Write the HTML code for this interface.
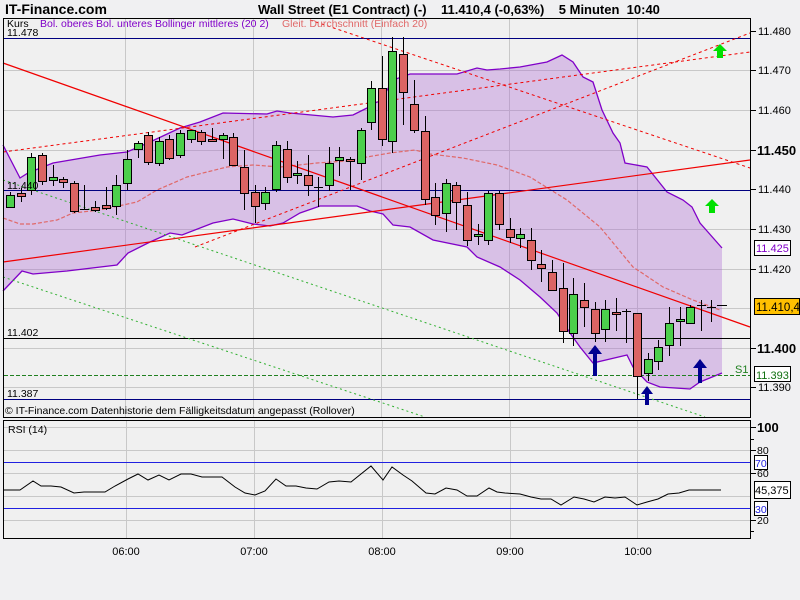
<!DOCTYPE html>
<html><head><meta charset="utf-8"><style>
html,body{margin:0;padding:0;background:#f0f0f2;width:800px;height:600px;overflow:hidden}
svg{display:block;font-family:"Liberation Sans",sans-serif}
</style></head><body>
<svg width="800" height="600" viewBox="0 0 800 600" xmlns="http://www.w3.org/2000/svg">
<rect x="0" y="0" width="800" height="600" fill="#f0f0f2"/>
<text x="5" y="14" font-size="14" font-weight="bold" fill="#000">IT-Finance.com</text>
<text x="258" y="14" font-size="13" font-weight="bold" fill="#000" xml:space="preserve">Wall Street (E1 Contract) (-)    11.410,4 (-0,63%)    5 Minuten  10:40</text>

<!-- main chart -->
<rect x="3.5" y="18.5" width="747" height="399" fill="#f0f0f0" stroke="none"/>
<g stroke="#c8c8c8" stroke-width="1">
<line x1="4" y1="70.5" x2="750" y2="70.5"/><line x1="4" y1="110.5" x2="750" y2="110.5"/><line x1="4" y1="150.5" x2="750" y2="150.5"/><line x1="4" y1="229.5" x2="750" y2="229.5"/><line x1="4" y1="269.5" x2="750" y2="269.5"/><line x1="4" y1="308.5" x2="750" y2="308.5"/><line x1="4" y1="348.5" x2="750" y2="348.5"/><line x1="4" y1="387.5" x2="750" y2="387.5"/>
<line x1="125.5" y1="19" x2="125.5" y2="417"/><line x1="253.5" y1="19" x2="253.5" y2="417"/><line x1="381.5" y1="19" x2="381.5" y2="417"/><line x1="509.5" y1="19" x2="509.5" y2="417"/><line x1="637.5" y1="19" x2="637.5" y2="417"/>
</g>
<polygon fill="rgba(171,103,211,0.35)" points="3,145 20,178 28,173 53,163 100,155 127,152 150,142 180,128 200,122 223,113 267,114 277,111 290,113 333,117 353,115 367,108 377,102 380,102 393,80 410,74 457,74 477,68 487,70 500,69 520,67 547,62 562,55 573,62 583,77 593,82 602,110 613,133 620,143 625,163 647,167 667,192 683,200 692,207 700,223 722,248 722,373 700,382 690,389 660,387 647,382 633,367 627,355 593,363 580,347 570,333 557,313 540,297 520,280 500,267 477,257 467,247 433,240 410,227 393,225 383,214 370,211 357,206 320,206 300,213 283,223 270,226 253,224 233,219 213,223 182,235 170,233 150,242 128,253 117,265 67,271 33,274 22,271 3,291"/>
<polyline fill="none" stroke="#8000c8" stroke-width="1.3" points="3,145 20,178 28,173 53,163 100,155 127,152 150,142 180,128 200,122 223,113 267,114 277,111 290,113 333,117 353,115 367,108 377,102 380,102 393,80 410,74 457,74 477,68 487,70 500,69 520,67 547,62 562,55 573,62 583,77 593,82 602,110 613,133 620,143 625,163 647,167 667,192 683,200 692,207 700,223 722,248"/>
<polyline fill="none" stroke="#8000c8" stroke-width="1.3" points="722,373 700,382 690,389 660,387 647,382 633,367 627,355 593,363 580,347 570,333 557,313 540,297 520,280 500,267 477,257 467,247 433,240 410,227 393,225 383,214 370,211 357,206 320,206 300,213 283,223 270,226 253,224 233,219 213,223 182,235 170,233 150,242 128,253 117,265 67,271 33,274 22,271 3,291"/>
<polyline fill="none" stroke="#e06868" stroke-width="1.2" stroke-dasharray="4,2" points="3,218 20,224 33,224 57,220 73,213 100,210 123,205 137,202 157,190 187,177 207,172 227,167 253,165 280,167 317,163 347,161 367,157 390,153 415,150 430,154 463,158 497,165 530,177 567,200 600,227 633,267 663,287 693,300 720,310"/>

<!-- horizontal levels -->
<line x1="4" y1="38.5" x2="750" y2="38.5" stroke="#000080"/>
<line x1="4" y1="190.5" x2="750" y2="190.5" stroke="#000080"/>
<line x1="4" y1="338.5" x2="750" y2="338.5" stroke="#000"/>
<line x1="4" y1="399.5" x2="750" y2="399.5" stroke="#000080"/>
<line x1="4" y1="375.5" x2="750" y2="375.5" stroke="#208020" stroke-dasharray="4,2"/>

<!-- trend lines -->
<line x1="3" y1="63" x2="750" y2="327" stroke="#f00000" stroke-width="1.2"/>
<line x1="3" y1="262" x2="750" y2="160" stroke="#f00000" stroke-width="1.2"/>
<line x1="3" y1="152" x2="750" y2="52" stroke="#f00000" stroke-dasharray="3,3"/>
<line x1="195" y1="247" x2="750" y2="33" stroke="#f00000" stroke-dasharray="3,3"/>
<line x1="310" y1="20" x2="750" y2="168" stroke="#f00000" stroke-dasharray="3,3"/>
<line x1="3" y1="180" x2="705" y2="417" stroke="#30b030" stroke-dasharray="2,3"/>
<line x1="3" y1="277" x2="425" y2="417" stroke="#30b030" stroke-dasharray="2,3"/>

<!-- candles -->
<g stroke="#000" stroke-width="1">
<line x1="10.5" y1="192" x2="10.5" y2="207"/><rect x="6.5" y="195.5" width="8" height="12" fill="#4ccf4c"/>
<line x1="21.5" y1="188" x2="21.5" y2="202"/><rect x="17.5" y="193.5" width="8" height="3" fill="#dc6464"/>
<line x1="31.5" y1="153" x2="31.5" y2="195"/><rect x="27.5" y="157.5" width="8" height="33" fill="#4ccf4c"/>
<line x1="42.5" y1="153" x2="42.5" y2="185"/><rect x="38.5" y="155.5" width="8" height="26" fill="#dc6464"/>
<line x1="53.5" y1="165" x2="53.5" y2="186"/><rect x="49.5" y="177.5" width="8" height="3" fill="#4ccf4c"/>
<line x1="63.5" y1="177" x2="63.5" y2="188"/><rect x="59.5" y="179.5" width="8" height="3" fill="#dc6464"/>
<line x1="74.5" y1="181" x2="74.5" y2="213"/><rect x="70.5" y="183.5" width="8" height="28" fill="#dc6464"/>
<line x1="84.5" y1="185" x2="84.5" y2="210"/><line x1="80" y1="209.5" x2="89" y2="209.5"/>
<line x1="95.5" y1="201" x2="95.5" y2="212"/><rect x="91.5" y="207.5" width="8" height="3" fill="#dc6464"/>
<line x1="106.5" y1="187" x2="106.5" y2="210"/><rect x="102.5" y="205.5" width="8" height="3" fill="#dc6464"/>
<line x1="116.5" y1="175" x2="116.5" y2="215"/><rect x="112.5" y="185.5" width="8" height="21" fill="#4ccf4c"/>
<line x1="127.5" y1="150" x2="127.5" y2="190"/><rect x="123.5" y="159.5" width="8" height="24" fill="#4ccf4c"/>
<line x1="138.5" y1="141" x2="138.5" y2="158"/><rect x="134.5" y="143.5" width="8" height="6" fill="#4ccf4c"/>
<line x1="148.5" y1="132" x2="148.5" y2="165"/><rect x="144.5" y="135.5" width="8" height="27" fill="#dc6464"/>
<line x1="159.5" y1="137" x2="159.5" y2="166"/><rect x="155.5" y="141.5" width="8" height="22" fill="#4ccf4c"/>
<line x1="169.5" y1="135" x2="169.5" y2="160"/><rect x="165.5" y="139.5" width="8" height="19" fill="#dc6464"/>
<line x1="180.5" y1="130" x2="180.5" y2="158"/><rect x="176.5" y="133.5" width="8" height="22" fill="#4ccf4c"/>
<line x1="191.5" y1="130" x2="191.5" y2="143"/><rect x="187.5" y="130.5" width="8" height="9" fill="#4ccf4c"/>
<line x1="201.5" y1="130" x2="201.5" y2="145"/><rect x="197.5" y="132.5" width="8" height="9" fill="#dc6464"/>
<line x1="212.5" y1="128" x2="212.5" y2="141"/><rect x="208.5" y="139.5" width="8" height="2" fill="#dc6464"/>
<line x1="223.5" y1="133" x2="223.5" y2="159"/><rect x="219.5" y="135.5" width="8" height="4" fill="#4ccf4c"/>
<line x1="233.5" y1="133" x2="233.5" y2="166"/><rect x="229.5" y="137.5" width="8" height="28" fill="#dc6464"/>
<line x1="244.5" y1="150" x2="244.5" y2="210"/><rect x="240.5" y="167.5" width="8" height="26" fill="#dc6464"/>
<line x1="255.5" y1="185" x2="255.5" y2="223"/><rect x="251.5" y="192.5" width="8" height="14" fill="#dc6464"/>
<line x1="265.5" y1="187" x2="265.5" y2="210"/><rect x="261.5" y="192.5" width="8" height="11" fill="#4ccf4c"/>
<line x1="276.5" y1="141" x2="276.5" y2="192"/><rect x="272.5" y="145.5" width="8" height="44" fill="#4ccf4c"/>
<line x1="287.5" y1="141" x2="287.5" y2="183"/><rect x="283.5" y="149.5" width="8" height="28" fill="#dc6464"/>
<line x1="297.5" y1="161" x2="297.5" y2="184"/><rect x="293.5" y="173.5" width="8" height="2" fill="#4ccf4c"/>
<line x1="308.5" y1="155" x2="308.5" y2="196"/><rect x="304.5" y="175.5" width="8" height="10" fill="#dc6464"/>
<line x1="318.5" y1="177" x2="318.5" y2="207"/><line x1="314" y1="187.5" x2="323" y2="187.5"/>
<line x1="329.5" y1="147" x2="329.5" y2="191"/><rect x="325.5" y="163.5" width="8" height="22" fill="#4ccf4c"/>
<line x1="339.5" y1="147" x2="339.5" y2="176"/><rect x="335.5" y="157.5" width="8" height="3" fill="#4ccf4c"/>
<line x1="350.5" y1="157" x2="350.5" y2="190"/><rect x="346.5" y="159.5" width="8" height="2" fill="#dc6464"/>
<line x1="361.5" y1="128" x2="361.5" y2="180"/><rect x="357.5" y="130.5" width="8" height="33" fill="#4ccf4c"/>
<line x1="371.5" y1="81" x2="371.5" y2="130"/><rect x="367.5" y="88.5" width="8" height="34" fill="#4ccf4c"/>
<line x1="382.5" y1="56" x2="382.5" y2="146"/><rect x="378.5" y="88.5" width="8" height="51" fill="#dc6464"/>
<line x1="392.5" y1="37" x2="392.5" y2="153"/><rect x="388.5" y="51.5" width="8" height="90" fill="#4ccf4c"/>
<line x1="403.5" y1="37" x2="403.5" y2="125"/><rect x="399.5" y="54.5" width="8" height="38" fill="#dc6464"/>
<line x1="414.5" y1="80" x2="414.5" y2="133"/><rect x="410.5" y="104.5" width="8" height="26" fill="#dc6464"/>
<line x1="425.5" y1="116" x2="425.5" y2="205"/><rect x="421.5" y="131.5" width="8" height="68" fill="#dc6464"/>
<line x1="435.5" y1="183" x2="435.5" y2="225"/><rect x="431.5" y="197.5" width="8" height="18" fill="#dc6464"/>
<line x1="446.5" y1="179" x2="446.5" y2="232"/><rect x="442.5" y="183.5" width="8" height="30" fill="#4ccf4c"/>
<line x1="456.5" y1="182" x2="456.5" y2="230"/><rect x="452.5" y="185.5" width="8" height="17" fill="#dc6464"/>
<line x1="467.5" y1="192" x2="467.5" y2="246"/><rect x="463.5" y="205.5" width="8" height="35" fill="#dc6464"/>
<line x1="478.5" y1="224" x2="478.5" y2="245"/><rect x="474.5" y="234.5" width="8" height="2" fill="#4ccf4c"/>
<line x1="488.5" y1="191" x2="488.5" y2="245"/><rect x="484.5" y="193.5" width="8" height="47" fill="#4ccf4c"/>
<line x1="499.5" y1="191" x2="499.5" y2="230"/><rect x="495.5" y="193.5" width="8" height="31" fill="#dc6464"/>
<line x1="510.5" y1="218" x2="510.5" y2="243"/><rect x="506.5" y="229.5" width="8" height="8" fill="#dc6464"/>
<line x1="520.5" y1="228" x2="520.5" y2="248"/><rect x="516.5" y="234.5" width="8" height="4" fill="#4ccf4c"/>
<line x1="531.5" y1="228" x2="531.5" y2="270"/><rect x="527.5" y="240.5" width="8" height="20" fill="#dc6464"/>
<line x1="541.5" y1="250" x2="541.5" y2="282"/><rect x="537.5" y="264.5" width="8" height="4" fill="#dc6464"/>
<line x1="552.5" y1="260" x2="552.5" y2="290"/><rect x="548.5" y="272.5" width="8" height="18" fill="#dc6464"/>
<line x1="563.5" y1="263" x2="563.5" y2="343"/><rect x="559.5" y="288.5" width="8" height="43" fill="#dc6464"/>
<line x1="573.5" y1="278" x2="573.5" y2="346"/><rect x="569.5" y="294.5" width="8" height="39" fill="#4ccf4c"/>
<line x1="584.5" y1="283" x2="584.5" y2="327"/><rect x="580.5" y="300.5" width="8" height="7" fill="#dc6464"/>
<line x1="595.5" y1="302" x2="595.5" y2="342"/><rect x="591.5" y="309.5" width="8" height="24" fill="#dc6464"/>
<line x1="605.5" y1="300" x2="605.5" y2="342"/><rect x="601.5" y="309.5" width="8" height="20" fill="#4ccf4c"/>
<line x1="616.5" y1="298" x2="616.5" y2="331"/><rect x="612.5" y="312.5" width="8" height="2" fill="#dc6464"/>
<line x1="626.5" y1="309" x2="626.5" y2="343"/><line x1="622" y1="311.5" x2="631" y2="311.5"/>
<line x1="637.5" y1="313" x2="637.5" y2="399"/><rect x="633.5" y="313.5" width="8" height="63" fill="#dc6464"/>
<line x1="648.5" y1="353" x2="648.5" y2="381"/><rect x="644.5" y="359.5" width="8" height="14" fill="#4ccf4c"/>
<line x1="658.5" y1="340" x2="658.5" y2="370"/><rect x="654.5" y="347.5" width="8" height="14" fill="#4ccf4c"/>
<line x1="669.5" y1="307" x2="669.5" y2="356"/><rect x="665.5" y="323.5" width="8" height="22" fill="#4ccf4c"/>
<line x1="680.5" y1="307" x2="680.5" y2="346"/><rect x="676.5" y="319.5" width="8" height="2" fill="#4ccf4c"/>
<line x1="690.5" y1="305" x2="690.5" y2="324"/><rect x="686.5" y="307.5" width="8" height="16" fill="#4ccf4c"/>
<line x1="701.5" y1="300" x2="701.5" y2="331"/><line x1="697" y1="305.5" x2="706" y2="305.5"/>
<line x1="711.5" y1="300" x2="711.5" y2="322"/><line x1="707" y1="307.5" x2="716" y2="307.5"/>
<line x1="717" y1="305.5" x2="727" y2="305.5"/>
</g>

<!-- arrows -->
<g fill="#00e000"><polygon points="720,44 727,51 723,51 723,58 717,58 717,51 713,51"/><polygon points="712,199 719,206 715,206 715,213 709,213 709,206 705,206"/></g>
<g fill="#000090"><polygon points="595,345 602,354 597,354 597,376 593,376 593,354 588,354"/><polygon points="647,386 653,394 649,394 649,405 645,405 645,394 641,394"/><polygon points="700,359 707,368 702,368 702,383 698,383 698,368 693,368"/></g>

<!-- left labels -->
<g font-size="10.5" fill="#000">
<text x="7" y="27">Kurs</text>
<text x="7" y="36">11.478</text>
<text x="7" y="189">11.440</text>
<text x="7" y="336">11.402</text>
<text x="7" y="397">11.387</text>
<text x="5" y="414">© IT-Finance.com  Datenhistorie dem Fälligkeitsdatum angepasst (Rollover)</text>
</g>
<text x="40" y="27" font-size="10.5" fill="#8000c8">Bol. oberes Bol. unteres Bollinger mittleres (20 2)</text>
<text x="282" y="27" font-size="10.5" fill="#e06868">Gleit. Durchschnitt (Einfach 20)</text>
<rect x="3.5" y="18.5" width="747" height="399" fill="none" stroke="#000"/>

<!-- right axis -->
<g stroke="#000"><line x1="751" y1="31.5" x2="756" y2="31.5"/><line x1="751" y1="70.5" x2="756" y2="70.5"/><line x1="751" y1="110.5" x2="756" y2="110.5"/><line x1="751" y1="150.5" x2="756" y2="150.5"/><line x1="751" y1="189.5" x2="756" y2="189.5"/><line x1="751" y1="229.5" x2="756" y2="229.5"/><line x1="751" y1="269.5" x2="756" y2="269.5"/><line x1="751" y1="348.5" x2="756" y2="348.5"/><line x1="751" y1="387.5" x2="756" y2="387.5"/></g>
<g font-size="11" fill="#000">
<text x="758" y="35">11.480</text><text x="758" y="74">11.470</text><text x="758" y="114">11.460</text>
<text x="757" y="155" font-weight="bold" font-size="13">11.450</text>
<text x="758" y="193">11.440</text><text x="758" y="233">11.430</text><text x="758" y="273">11.420</text>
<text x="757" y="353" font-weight="bold" font-size="13">11.400</text>
<text x="758" y="391">11.390</text>
</g>
<rect x="754.5" y="240.5" width="36" height="15" fill="#fff" stroke="#000"/>
<text x="756" y="252" font-size="11" fill="#8000c8">11.425</text>
<rect x="754.5" y="298.5" width="45" height="16" fill="#ffc000" stroke="#000"/>
<text x="756" y="311" font-size="11.5" fill="#000">11.410,4</text>
<rect x="754.5" y="366.5" width="36" height="15" fill="#fff" stroke="#000"/>
<text x="756" y="379" font-size="11" fill="#107010">11.393</text>
<text x="735" y="373" font-size="11" fill="#208020">S1</text>

<!-- RSI -->
<rect x="3.5" y="420.5" width="747" height="118" fill="#f0f0f0" stroke="none"/>
<g stroke="#c8c8c8"><line x1="4" y1="427.5" x2="750" y2="427.5"/><line x1="4" y1="450.5" x2="750" y2="450.5"/><line x1="4" y1="473.5" x2="750" y2="473.5"/><line x1="4" y1="496.5" x2="750" y2="496.5"/><line x1="4" y1="520.5" x2="750" y2="520.5"/>
<line x1="126.5" y1="421" x2="126.5" y2="538"/><line x1="254.5" y1="421" x2="254.5" y2="538"/><line x1="382.5" y1="421" x2="382.5" y2="538"/><line x1="510.5" y1="421" x2="510.5" y2="538"/><line x1="637.5" y1="421" x2="637.5" y2="538"/></g>
<line x1="4" y1="462.5" x2="750" y2="462.5" stroke="#2020e0"/>
<line x1="4" y1="508.5" x2="750" y2="508.5" stroke="#2020e0"/>
<polyline fill="none" stroke="#000" stroke-width="1" points="4,490 20,490 33,481 41,486 51,486 61,487 74,493 84,492 105,492 115,486 128,479 138,474 148,480 159,475 169,480 181,474 191,474 202,477 222,477 235,487 245,493 255,495 265,491 276,479 286,486 296,486 306,488 317,489 329,482 339,481 351,482 371,466 383,480 392,467 403,475 412,481 426,493 435,494 446,488 457,490 467,496 477,496 489,488 497,492 505,493 520,494 531,497 541,499 551,499 561,505 574,497 584,499 594,502 605,497 615,498 625,497 637,505 647,502 658,499 668,494 679,493 689,490 721,490"/>
<text x="8" y="433" font-size="10.5" fill="#000">RSI (14)</text>
<rect x="3.5" y="420.5" width="747" height="118" fill="none" stroke="#000"/>
<g stroke="#000"><line x1="751" y1="427.5" x2="756" y2="427.5"/><line x1="751" y1="439.5" x2="754" y2="439.5"/><line x1="751" y1="450.5" x2="756" y2="450.5"/><line x1="751" y1="473.5" x2="756" y2="473.5"/><line x1="751" y1="520.5" x2="756" y2="520.5"/><line x1="751" y1="531.5" x2="754" y2="531.5"/></g>
<text x="757" y="432" font-size="13" font-weight="bold" fill="#000">100</text>
<text x="757" y="454" font-size="10.5" fill="#000">80</text>
<text x="757" y="477" font-size="10.5" fill="#000">60</text>
<text x="757" y="524" font-size="10.5" fill="#000">20</text>
<rect x="754.5" y="455.5" width="13" height="14" fill="#fff" stroke="#000"/>
<text x="755" y="467" font-size="10.5" fill="#2020e0">70</text>
<rect x="754.5" y="501.5" width="13" height="14" fill="#fff" stroke="#000"/>
<text x="755" y="513" font-size="10.5" fill="#2020e0">30</text>
<rect x="754.5" y="481.5" width="36" height="17" fill="#fff" stroke="#000"/>
<text x="755" y="494" font-size="11" fill="#000">45,375</text>

<!-- time axis -->
<g font-size="11" fill="#000" text-anchor="middle">
<text x="126" y="555">06:00</text><text x="254" y="555">07:00</text><text x="382" y="555">08:00</text><text x="510" y="555">09:00</text><text x="638" y="555">10:00</text>
</g>
</svg>
</body></html>
